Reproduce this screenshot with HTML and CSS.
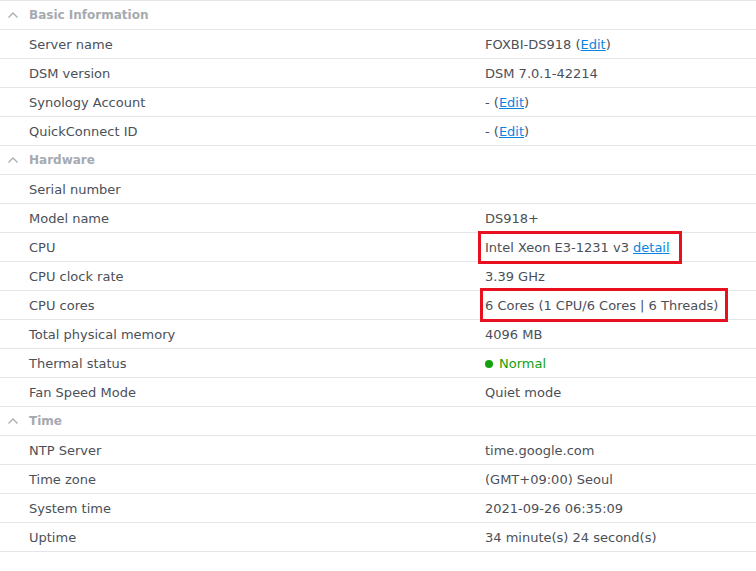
FILE: index.html
```html
<!DOCTYPE html>
<html>
<head>
<meta charset="utf-8">
<link rel="stylesheet" href="styles.css">
</head>
<body>
<div class="info">
  <div class="group">
    <div class="head"><svg class="chev" width="12" height="8" viewBox="0 0 12 8"><path d="M1.5 6.5 L6 2 L10.5 6.5" fill="none" stroke="#a9adb3" stroke-width="1.3"/></svg><span>Basic Information</span></div>
    <div class="row"><div class="label">Server name</div><div class="value">FOXBI-DS918 (<a>Edit</a>)</div></div>
    <div class="row"><div class="label">DSM version</div><div class="value">DSM 7.0.1-42214</div></div>
    <div class="row"><div class="label">Synology Account</div><div class="value">- (<a>Edit</a>)</div></div>
    <div class="row"><div class="label">QuickConnect ID</div><div class="value">- (<a>Edit</a>)</div></div>
  </div>
  <div class="group">
    <div class="head"><svg class="chev" width="12" height="8" viewBox="0 0 12 8"><path d="M1.5 6.5 L6 2 L10.5 6.5" fill="none" stroke="#a9adb3" stroke-width="1.3"/></svg><span>Hardware</span></div>
    <div class="row"><div class="label">Serial number</div><div class="value"></div></div>
    <div class="row"><div class="label">Model name</div><div class="value">DS918+</div></div>
    <div class="row"><div class="label">CPU</div><div class="value">Intel Xeon E3-1231 v3 <a>detail</a><span class="mark mark-cpu"></span></div></div>
    <div class="row"><div class="label">CPU clock rate</div><div class="value">3.39 GHz</div></div>
    <div class="row"><div class="label">CPU cores</div><div class="value">6 Cores (1 CPU/6 Cores | 6 Threads)<span class="mark mark-cores"></span></div></div>
    <div class="row"><div class="label">Total physical memory</div><div class="value">4096 MB</div></div>
    <div class="row"><div class="label">Thermal status</div><div class="value ok"><span class="dot"></span>Normal</div></div>
    <div class="row"><div class="label">Fan Speed Mode</div><div class="value">Quiet mode</div></div>
  </div>
  <div class="group">
    <div class="head"><svg class="chev" width="12" height="8" viewBox="0 0 12 8"><path d="M1.5 6.5 L6 2 L10.5 6.5" fill="none" stroke="#a9adb3" stroke-width="1.3"/></svg><span>Time</span></div>
    <div class="row"><div class="label">NTP Server</div><div class="value">time.google.com</div></div>
    <div class="row"><div class="label">Time zone</div><div class="value">(GMT+09:00) Seoul</div></div>
    <div class="row"><div class="label">System time</div><div class="value">2021-09-26 06:35:09</div></div>
    <div class="row"><div class="label">Uptime</div><div class="value">34 minute(s) 24 second(s)</div></div>
  </div>
</div>
</body>
</html>
```
FILE: styles.css
```css
html, body {
  margin: 0;
  padding: 0;
  background: #ffffff;
}
body {
  font-family: "DejaVu Sans", Verdana, sans-serif;
  font-size: 13px;
  color: #4b5058;
}
.info {
  border-top: 1px solid #e3e7ec;
}
.head {
  height: 28px;
  display: flex;
  align-items: center;
  border-bottom: 1px solid #e3e7ec;
  color: #a5aab0;
  font-weight: bold;
  font-size: 12px;
}
.chev {
  margin-left: 7px;
  margin-right: 10px;
}
.row {
  height: 28px;
  display: flex;
  align-items: stretch;
  border-bottom: 1px solid #e3e7ec;
}
.label {
  width: 456px;
  padding-left: 29px;
  flex: none;
  display: flex;
  align-items: center;
  padding-top: 1px;
  box-sizing: border-box;
  width: 485px;
}
.value {
  position: relative;
  display: flex;
  align-items: center;
  white-space: pre;
  padding-top: 1px;
}
.value a {
  color: #0a84e0;
  text-decoration: underline;
}
.ok {
  color: #13a10e;
}
.dot {
  width: 8px;
  height: 8px;
  border-radius: 50%;
  background: #13a10e;
  margin-right: 6px;
}
.mark {
  position: absolute;
  border: 3px solid #e8101e;
  box-sizing: border-box;
}
.mark-cpu {
  left: -7px;
  top: -2px;
  width: 204px;
  height: 33px;
}
.mark-cores {
  left: -5px;
  top: -3px;
  width: 248px;
  height: 34px;
}
```
